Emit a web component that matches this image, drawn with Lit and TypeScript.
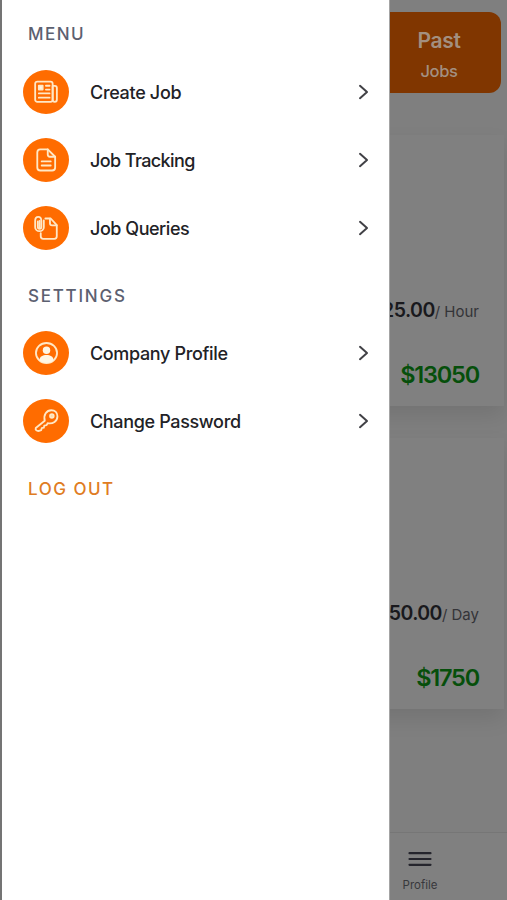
import { LitElement, html, css, svg } from "lit";
import { customElement, property } from "lit/decorators.js";
import { styleMap } from "lit/directives/style-map.js";

const icons: Record<string, unknown> = {
  news: svg`<rect x="1.2" y="1.7" width="18.2" height="21" rx="2.2"/><path d="M19.4 6.2h2.3q2.1 0 2.1 2.1v12.3q0 2.1-2.2 2.1t-2.2-2.1z"/><rect x="5" y="5.8" width="4" height="4.2" fill="#fff6e4"/><path d="M12.4 6h3.8M12.4 10h3.8M5 14h11.2M5 18.4h11.2"/>`,
  doc: svg`<path d="M14.3 1.4H6.6Q3.4 1.4 3.4 4.6v15.6q0 3.2 3.2 3.2h12.2q3.2 0 3.2-3.2V9.1z"/><path d="M14.3 1.6v5.2q0 2.3 2.3 2.3H22M8 14h9.4M8 18.2h9.4"/>`,
  clip: svg`<path d="M11.8 2.6h5.6l6.3 7v11.6q0 2.6-2.6 2.6H9.6q-2.6 0-2.6-2.6V18"/><path d="M16.6 2.8v4.7q0 2.2 2.2 2.2h4.8"/><path d="M10.2 4.6v7c0 5.6-9 5.6-9 0V5c0-5.4 6.4-5.4 6.4 0v6.4c0 2.6-3.6 2.6-3.6 0V5.6" /><path d="M5.8 5v7"/>`,
  person: svg`<ellipse cx="13" cy="12.5" rx="11" ry="10.4"/><circle cx="13" cy="9.6" r="3.9" fill="#fff6e4" stroke="none"/><path d="M5.5 20c.6-4 3.5-5.4 7.5-5.4s6.9 1.4 7.5 5.4c-4 3.7-11 3.7-15 0z" fill="#fff6e4" stroke="none"/>`,
  key: svg`<path d="M11.2 12.2C9.5 6 13.2 1.3 18 1.3c3.9 0 6.4 2.7 6.4 6.3 0 5-4.7 8.4-10.2 7.2l-1.1 2-2.4.5-.5 2.2-2.2.5-.5 2-2.2.8c-2.3.4-4.2-.8-3.5-3z"/><circle cx="18.6" cy="7.2" r="1.9" fill="#ffd79e"/>`,
};

@customElement("menu-row")
class MenuRow extends LitElement {
  @property() label = "";
  @property() icon = "";
  @property({ type: Number }) tracking = -0.4;
  static styles = css`
    :host { display: flex; align-items: center; height: 68px; padding: 0 20px 0 21px; color: #222226; }
    .disc { width: 46px; height: 44px; border-radius: 50%; background: #ff6c00; display: grid; place-items: center; }
    .glyph { width: 25px; height: 24px; fill: none; stroke: #ffe8c6; stroke-width: 1.9; stroke-linecap: round; stroke-linejoin: round; }
    .label { flex: 1; margin-left: 21px; font-size: 18px; font-weight: 500; white-space: nowrap; }
    .arrow { width: 12px; height: 16px; margin-bottom: 1px; fill: none; stroke: #414146; stroke-width: 2; stroke-linecap: round; stroke-linejoin: round; }
  `;
  render() {
    return html`
      <span class="disc"><svg class="glyph" viewBox="0 0 26 25">${icons[this.icon]}</svg></span>
      <span class="label" style=${styleMap({ letterSpacing: `${this.tracking}px` })}>${this.label}</span>
      <svg class="arrow" viewBox="0 0 12 16"><path d="M3 1.8 10 8 3 14.2" /></svg>
    `;
  }
}

@customElement("job-card")
class JobCard extends LitElement {
  @property() rate = "";
  @property() unit = "";
  @property() total = "";
  static styles = css`
    :host { display: flex; flex-direction: column; justify-content: flex-end; align-items: flex-end; box-sizing: border-box; height: 271px; margin-right: 3px; padding: 0 25px 15px 0; background: #808080; box-shadow: 0 10px 20px #00000018; }
    .rate { height: 30px; line-height: 30px; font-size: 19.5px; font-weight: 600; color: #19191d; white-space: nowrap; letter-spacing: -0.55px; }
    .unit { font-size: 15px; font-weight: 400; color: #343438; letter-spacing: 0; }
    .total { height: 32px; line-height: 32px; margin-top: 34px; font-size: 23.5px; font-weight: 600; color: #064f0b; letter-spacing: -1.2px; }
  `;
  render() {
    return html`
      <div class="rate">${this.rate}<span class="unit">/ ${this.unit}</span></div>
      <div class="total">${this.total}</div>
    `;
  }
}

@customElement("app-root")
class AppRoot extends LitElement {
  static styles = css`
    :host { display: block; position: relative; width: 507px; height: 900px; overflow: hidden; font-family: Inter, "Liberation Sans", sans-serif; background: #7f7f7f; }
    .page { display: flex; flex-direction: column; height: 900px; }
    .tabs { display: flex; justify-content: flex-end; padding: 12px 6px 0 0; height: 135px; box-sizing: border-box; }
    .tab { display: flex; flex-direction: column; align-items: center; box-sizing: border-box; width: 124px; height: 81px; padding-top: 14px; border-radius: 0 12px 12px 0; background: #803600; color: #a39080; }
    .tab-title { font-size: 21px; line-height: 30px; font-weight: 600; letter-spacing: -0.3px; }
    .tab-sub { font-size: 16.5px; line-height: 31px; font-weight: 500; letter-spacing: -0.4px; }
    .jobs { flex: 1; display: flex; flex-direction: column; gap: 32px; }
    .nav { display: flex; justify-content: flex-end; height: 68px; box-sizing: border-box; border-top: 1px solid #767676; background: #808080; }
    .nav-item { display: flex; flex-direction: column; align-items: center; width: 80px; margin-right: 47px; padding-top: 18px; font-size: 11.5px; line-height: 16px; color: #38383c; }
    .burger { width: 24px; height: 16px; margin-bottom: 10px; stroke: #25252d; stroke-width: 2.2; stroke-linecap: round; }
    .drawer { position: absolute; top: 0; left: 0; width: 390px; height: 900px; box-sizing: border-box; border-left: 2px solid #747474; border-right: 1px solid #a4a4a4; background: #fff; }
    .heading { height: 58px; box-sizing: border-box; padding: 10px 0 0 26px; line-height: 48px; font-size: 17px; font-weight: 500; letter-spacing: 1.5px; color: #5c6070; }
    .settings { height: 57px; line-height: 49px; letter-spacing: 1.75px; }
    .logout { color: #df7c23; line-height: 49px; letter-spacing: 1.5px; }
  `;
  render() {
    return html`
      <main class="page">
        <div class="tabs">
          <div class="tab"><span class="tab-title">Past</span><span class="tab-sub">Jobs</span></div>
        </div>
        <div class="jobs">
          <job-card rate="$25.00" unit="Hour" total="$13050"></job-card>
          <job-card rate="$250.00" unit="Day" total="$1750"></job-card>
        </div>
        <nav class="nav">
          <div class="nav-item">
            <svg class="burger" viewBox="0 0 24 16"><path d="M1.5 2.2h21M1.5 8h21M1.5 13.8h21" /></svg>
            Profile
          </div>
        </nav>
      </main>
      <aside class="drawer">
        <div class="heading">MENU</div>
        <menu-row icon="news" label="Create Job" tracking="-0.32"></menu-row>
        <menu-row icon="doc" label="Job Tracking" tracking="-0.6"></menu-row>
        <menu-row icon="clip" label="Job Queries" tracking="-0.47"></menu-row>
        <div class="heading settings">SETTINGS</div>
        <menu-row icon="person" label="Company Profile" tracking="-0.35"></menu-row>
        <menu-row icon="key" label="Change Password" tracking="-0.35"></menu-row>
        <div class="heading logout">LOG OUT</div>
      </aside>
    `;
  }
}
